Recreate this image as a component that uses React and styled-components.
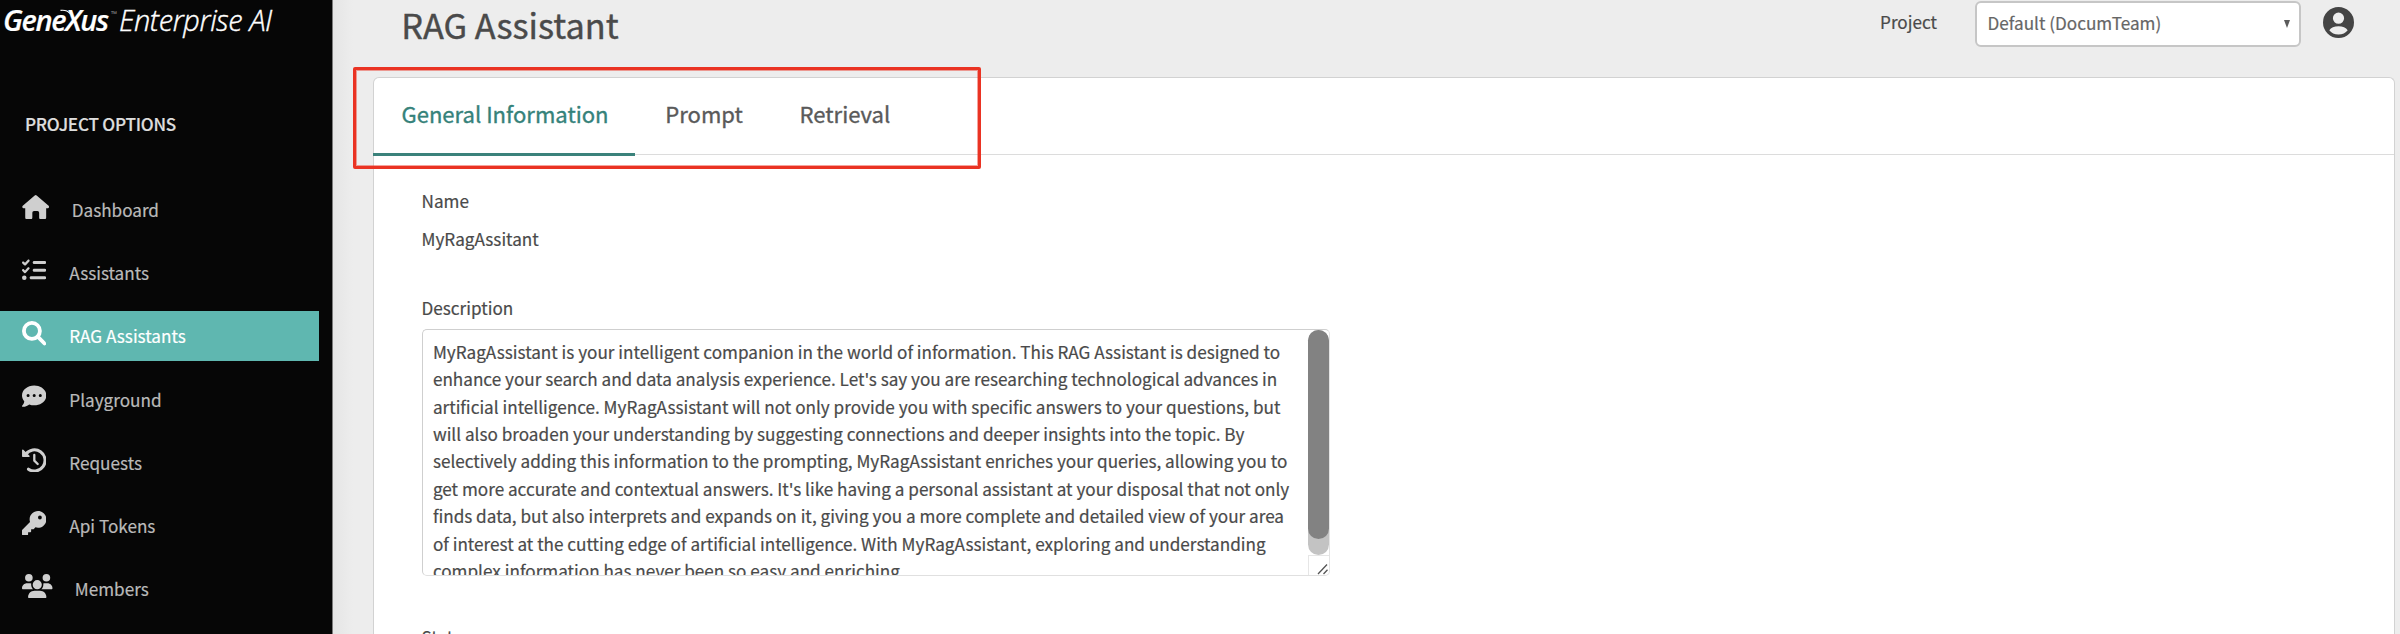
import React from 'react';
import styled, { createGlobalStyle } from 'styled-components';
import {
  FaListCheck,
  FaCommentDots,
  FaKey,
  FaUsers,
} from 'react-icons/fa6';

const GlobalStyle = createGlobalStyle`
  * { box-sizing: border-box; }
  body {
    margin: 0;
    background: #ededed;
    color: #4a4a4a;
    font-family: "Noto Sans CJK SC", "Noto Sans", sans-serif;
    font-size: 17.15px;
    -webkit-text-stroke: 0.2px currentColor;
  }
`;

const Page = styled.div`
  display: flex;
  width: 2400px;
  height: 634px;
  overflow: hidden;
  position: relative;
`;

/* Sidebar */

const Sidebar = styled.aside`
  flex: none;
  width: 332.5px;
  height: 100%;
  background: #060606;
  border-right: 1px solid #7b7b7b;
`;

const Logo = styled.div`
  display: flex;
  height: 39.5px;
  padding-left: 3px;
  color: #fff;
  font: italic 29px/39.5px "Open Sans", sans-serif;
  white-space: pre;
  position: relative;
`;

const LogoBrand = styled.span`
  width: 108px;
  font-weight: 600;
  letter-spacing: -1.35px;
`;

const LogoMark = styled.span`
  width: 8px;
  font-size: 8px;
  line-height: 28px;
  font-style: normal;
  color: #999;
  -webkit-text-stroke: 0;
`;

const LogoProduct = styled.span`
  font-weight: 300;
  letter-spacing: -0.38px;
  -webkit-text-stroke: 0.4px currentColor;
`;

const Swoosh = styled.svg`
  position: absolute;
  left: 57px;
  top: 8px;
  width: 18px;
  height: 12px;
`;

const SectionTitle = styled.h2`
  margin: 68px 0 44.8px 25px;
  height: 32px;
  line-height: 32px;
  font-size: 17.15px;
  font-weight: 500;
  letter-spacing: -0.24px;
  color: #dedede;
`;

const Nav = styled.nav`
  display: flex;
  flex-direction: column;
  gap: 12.7px;
`;

const NavItem = styled.a`
  display: flex;
  align-items: center;
  width: 318.7px;
  height: 50.5px;
  padding-left: 22px;
  color: ${(p) => (p.$active ? '#fff' : '#bababa')};
  background: ${(p) => (p.$active ? '#5fb7b0' : 'transparent')};

  svg {
    flex: none;
    width: ${(p) => p.$iconWidth}px;
    height: 24.4px;
    margin: -5px ${(p) => (p.$iconWidth > 25 ? 22.3 : 22.9)}px 0 0;
    color: ${(p) => (p.$active ? '#fff' : '#cfcfcf')};
  }
`;

/* Main area */

const Main = styled.main`
  flex: 1;
  min-width: 0;
  display: flex;
  flex-direction: column;
  padding: 0 5.5px 0 40.5px;
  background: linear-gradient(to right, #e5e5e5, #ededed 20px);
`;

const Header = styled.header`
  flex: none;
  display: flex;
  align-items: flex-start;
  height: 77px;
  padding-left: 28.3px;
`;

const Title = styled.h1`
  flex: 1;
  margin: 0;
  line-height: 49px;
  font-size: 34.3px;
  font-weight: 400;
  -webkit-text-stroke: 0.4px currentColor;
`;

const ProjectLabel = styled.label`
  margin-right: 37.5px;
  line-height: 43.5px;
`;

const ProjectSelect = styled.div`
  display: flex;
  justify-content: space-between;
  align-items: center;
  width: 326.5px;
  height: 45.5px;
  margin-top: 1px;
  padding: 0 9.5px 3px 11px;
  border: 2px solid #c6c6c6;
  border-radius: 6px;
  background: #fff;
  color: #666;
`;

const Caret = styled.span`
  width: 0;
  height: 0;
  margin-top: 3px;
  border: 3.5px solid transparent;
  border-top: 8px solid #5b5b5b;
  border-bottom: 0;
`;

const Avatar = styled.svg`
  width: 31px;
  height: 31px;
  margin: 7px 41px 0 21.5px;
  fill: #444;
`;

const Card = styled.section`
  flex: 1;
  border: 1px solid #d2d2d2;
  border-bottom: 0;
  border-radius: 6px 6px 0 0;
  background: #fff;
`;

const TabBar = styled.div`
  display: flex;
  gap: 2.8px;
  height: 77px;
  border-bottom: 1px solid #dcdcdc;
`;

const Tab = styled.button`
  height: ${(p) => (p.$active ? 78 : 76)}px;
  margin: 0 0 0 -1px;
  padding: 0 26.4px 4px 28.5px;
  border: 0;
  border-bottom: 3px solid ${(p) => (p.$active ? '#3b827b' : 'transparent')};
  background: none;
  color: ${(p) => (p.$active ? '#35827a' : '#5a5a5a')};
  font-family: inherit;
  font-size: 22.05px;
  font-weight: 400;
  line-height: 71px;
  -webkit-text-stroke: 0.35px currentColor;
`;

const Form = styled.div`
  display: flex;
  flex-direction: column;
  padding: 33px 0 0 47.5px;
`;

const Line = styled.div`
  height: 26px;
  line-height: 26px;
  margin-top: ${(p) => p.$gap || 0}px;
`;

const TextBox = styled.div`
  display: flex;
  width: 908.5px;
  height: 247px;
  margin-top: 7.5px;
  border: 1px solid #cfcfcf;
  border-right-color: #e4e4e4;
  border-bottom-color: #e0e0e0;
  border-radius: 5px;
  overflow: hidden;
`;

const TextLines = styled.div`
  flex: 1;
  padding: 8.2px 0 0 10.4px;
  line-height: 27.43px;
  white-space: pre;
`;

const ScrollColumn = styled.div`
  display: flex;
  flex-direction: column;
  width: 21.5px;
`;

const Track = styled.div`
  height: 225px;
  border-radius: 11px;
  background: #c3c3c3;
`;

const Thumb = styled.div`
  height: 209.5px;
  border-radius: 11px;
  background: #828282;
`;

const Grip = styled.div`
  flex: 1;
  display: flex;
  justify-content: flex-end;
  align-items: flex-end;
  border-left: 1px solid #e6e6e6;
  border-top: 1px solid #e6e6e6;
`;

const GripLines = styled.svg`
  width: 12px;
  height: 12px;
  stroke: #555;
  stroke-width: 1.3;
`;

const Highlight = styled.div`
  position: absolute;
  left: 353px;
  top: 67px;
  width: 628px;
  height: 102px;
  border: 3px solid #ea3323;
  border-radius: 2px;
  box-shadow: inset 0 0 0 1px rgba(234, 51, 35, 0.45);
`;

const HouseIcon = () => (
  <svg viewBox="0 0 27.4 24.7" fill="currentColor">
    <path d="M12.7.5Q13.7-.3 14.7.5L26.8 11Q28 12.6 26.3 13.3H24.3V22.7Q24.3 24.6 22.4 24.6H19Q17.2 24.6 17.2 22.8V18Q17.2 16.3 15.5 16.3H12Q10.3 16.3 10.3 18V22.8Q10.3 24.6 8.5 24.6H5Q3.1 24.6 3.1 22.7V13.3H1.2Q-.6 12.6.6 11Z" />
  </svg>
);

const SearchIcon = () => (
  <svg viewBox="0 0 512 512" fill="none" stroke="currentColor">
    <circle cx="208" cy="208" r="168" strokeWidth="80" />
    <path d="M330 330L472 472" strokeWidth="80" strokeLinecap="round" />
  </svg>
);

const HistoryIcon = () => (
  <svg viewBox="0 0 24.4 24.4" fill="none" stroke="currentColor">
    <path d="M3.8 6.3A10.6 10.6 0 1 1 6.5 21.2" strokeWidth="3.1" strokeLinecap="round" />
    <path d="M12.3 7V12.6L15.7 16" strokeWidth="2.3" strokeLinecap="round" strokeLinejoin="round" />
    <path d="M.8 2.2V8.3H7Z" fill="currentColor" strokeWidth="1.5" strokeLinejoin="round" />
  </svg>
);

const menu = [
  { label: 'Dashboard', Icon: HouseIcon, width: 27.4 },
  { label: 'Assistants', Icon: FaListCheck, width: 24.4 },
  { label: 'RAG Assistants', Icon: SearchIcon, width: 24.4, active: true },
  { label: 'Playground', Icon: FaCommentDots, width: 24.4 },
  { label: 'Requests', Icon: HistoryIcon, width: 24.4 },
  { label: 'Api Tokens', Icon: FaKey, width: 24.4 },
  { label: 'Members', Icon: FaUsers, width: 30.5 },
];

const description = [
  'MyRagAssistant is your intelligent companion in the world of information. This RAG Assistant is designed to',
  "enhance your search and data analysis experience. Let's say you are researching technological advances in",
  'artificial intelligence. MyRagAssistant will not only provide you with specific answers to your questions, but',
  'will also broaden your understanding by suggesting connections and deeper insights into the topic. By',
  'selectively adding this information to the prompting, MyRagAssistant enriches your queries, allowing you to',
  "get more accurate and contextual answers. It's like having a personal assistant at your disposal that not only",
  'finds data, but also interprets and expands on it, giving you a more complete and detailed view of your area',
  'of interest at the cutting edge of artificial intelligence. With MyRagAssistant, exploring and understanding',
  'complex information has never been so easy and enriching.',
].join('\n');

export default function App() {
  return (
    <Page>
      <GlobalStyle />
      <Sidebar>
        <Logo>
          <LogoBrand>GeneXus</LogoBrand>
          <LogoMark>™</LogoMark>
          <LogoProduct>Enterprise AI</LogoProduct>
          <Swoosh viewBox="0 0 18 12">
            <path d="M3.5 2.4C7 2 10.5 2.2 12.8 5.5" fill="none" stroke="#fff" strokeWidth="1.1" />
          </Swoosh>
        </Logo>
        <SectionTitle>PROJECT OPTIONS</SectionTitle>
        <Nav>
          {menu.map(({ label, Icon, width, active }) => (
            <NavItem key={label} $active={active} $iconWidth={width}>
              <Icon />
              {label}
            </NavItem>
          ))}
        </Nav>
      </Sidebar>
      <Main>
        <Header>
          <Title>RAG Assistant</Title>
          <ProjectLabel>Project</ProjectLabel>
          <ProjectSelect>
            Default (DocumTeam)
            <Caret />
          </ProjectSelect>
          <Avatar viewBox="0 0 31 31">
            <path
              fillRule="evenodd"
              d="M15.5 0a15.5 15.5 0 1 0 0 31a15.5 15.5 0 1 0 0-31zM15.5 5.6a5.6 5.6 0 1 1 0 11.2a5.6 5.6 0 1 1 0-11.2zM6.3 23.2c1.6-2.8 5-4 9.2-4s7.6 1.2 9.2 4c-2 2.7-5.3 4.3-9.2 4.3s-7.2-1.6-9.2-4.3z"
            />
          </Avatar>
        </Header>
        <Card>
          <TabBar>
            <Tab $active>General Information</Tab>
            <Tab>Prompt</Tab>
            <Tab>Retrieval</Tab>
          </TabBar>
          <Form>
            <Line>Name</Line>
            <Line $gap={11.5}>MyRagAssitant</Line>
            <Line $gap={43.5}>Description</Line>
            <TextBox>
              <TextLines>{description}</TextLines>
              <ScrollColumn>
                <Track>
                  <Thumb />
                </Track>
                <Grip>
                  <GripLines viewBox="0 0 12 12">
                    <path d="M1 11L10 1.5M6.5 11L10.5 6.8" />
                  </GripLines>
                </Grip>
              </ScrollColumn>
            </TextBox>
            <Line $gap={48.5}>Status</Line>
          </Form>
        </Card>
      </Main>
      <Highlight />
    </Page>
  );
}
